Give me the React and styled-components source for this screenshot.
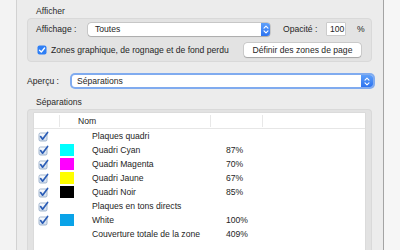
import React from 'react';
import styled, { createGlobalStyle } from 'styled-components';

const rows = [
  { name: 'Plaques quadri', checked: true },
  { name: 'Quadri Cyan', color: '#00ffff', value: '87%', checked: true },
  { name: 'Quadri Magenta', color: '#ff00ff', value: '70%', checked: true },
  { name: 'Quadri Jaune', color: '#ffff00', value: '67%', checked: true },
  { name: 'Quadri Noir', color: '#000000', value: '85%', checked: true },
  { name: 'Plaques en tons directs', checked: true },
  { name: 'White', color: '#0aa3e8', value: '100%', checked: true },
  { name: 'Couverture totale de la zone', value: '409%' },
];

const Stepper = ({ width }) => (
  <StepperBox style={{ width }}>
    <svg width="6" height="9" viewBox="0 0 6 9">
      <path d="M1 3.2 L3 1.2 L5 3.2 M1 5.8 L3 7.8 L5 5.8" fill="none" stroke="#fff" strokeWidth="1.1" strokeLinecap="round" strokeLinejoin="round" />
    </svg>
  </StepperBox>
);

const TableCheck = () => (
  <svg width="11" height="11" viewBox="0 0 11 11">
    <defs>
      <linearGradient id="cbg" x1="0" y1="0" x2="0" y2="1">
        <stop offset="0" stopColor="#ffffff" />
        <stop offset="1" stopColor="#cfdcec" />
      </linearGradient>
    </defs>
    <rect x="1" y="2" width="8" height="8" rx="1.5" fill="url(#cbg)" stroke="#8ea5c2" strokeWidth="0.8" />
    <path d="M2.6 5.6 L4.6 8.2 L9.6 1.4" fill="none" stroke="#2b5db6" strokeWidth="1.7" strokeLinecap="round" strokeLinejoin="round" />
  </svg>
);

const BlueCheck = () => (
  <svg width="10" height="10" viewBox="0 0 10 10">
    <rect x="0.5" y="0.5" width="9" height="9" rx="2" fill="#2f7ff5" />
    <path d="M2.5 5.2 L4.3 7 L7.6 3" fill="none" stroke="#fff" strokeWidth="1.3" strokeLinecap="round" strokeLinejoin="round" />
  </svg>
);

export default function App() {
  return (
    <Window>
      <GlobalStyle />
      <SideStrip $side="left" />
      <Panel>
        <SectionLabel>Afficher</SectionLabel>
        <GroupBox>
          <FormRow>
            <FieldLabel $width={52}>Affichage :</FieldLabel>
            <SelectBox $width="182px" $height={13}>
              <span>Toutes</span>
              <Stepper width={9} />
            </SelectBox>
            <FieldLabel $width={44} style={{ marginLeft: 13 }}>Opacité :</FieldLabel>
            <NumberInput>100</NumberInput>
            <Unit>%</Unit>
          </FormRow>
          <FormRow>
            <CheckLabel>
              <BlueCheck />
              <span>Zones graphique, de rognage et de fond perdu</span>
            </CheckLabel>
            <PushButton>Définir des zones de page</PushButton>
          </FormRow>
        </GroupBox>

        <PreviewRow>
          <FieldLabel $width={45}>Aperçu :</FieldLabel>
          <SelectBox $focus $height={12} $width="auto">
            <span>Séparations</span>
            <Stepper width={12} />
          </SelectBox>
        </PreviewRow>

        <SectionLabel style={{ marginTop: 7 }}>Séparations</SectionLabel>
        <TableGroup>
          <Table>
            <HeaderRow>
              <HeaderCell />
              <HeaderCell $divider>
                <span>Nom</span>
              </HeaderCell>
              <HeaderCell $divider />
              <HeaderCell $divider />
            </HeaderRow>
            {rows.map((row) => (
              <Row key={row.name}>
                <CheckCell>{row.checked && <TableCheck />}</CheckCell>
                <div>{row.color && <Swatch $color={row.color} />}</div>
                <div>{row.name}</div>
                <div>{row.value}</div>
              </Row>
            ))}
          </Table>
        </TableGroup>
      </Panel>
      <SideStrip $side="right" />
    </Window>
  );
}

const GlobalStyle = createGlobalStyle`
  *, *::before, *::after {
    box-sizing: border-box;
  }
  html, body {
    margin: 0;
    padding: 0;
  }
  body {
    width: 400px;
    height: 250px;
    overflow: hidden;
    font-family: "Liberation Sans", Arial, sans-serif;
    font-size: 8.6px;
    color: #262626;
  }
`;

const Window = styled.div`
  display: flex;
  width: 400px;
  height: 250px;
  overflow: hidden;
`;

const SideStrip = styled.div`
  flex: none;
  width: 17px;
  background: ${(p) => (p.$side === 'left' ? '#f3f3f3' : '#f6f6f6')};
  border-${(p) => (p.$side === 'left' ? 'right' : 'left')}: 1px solid
    ${(p) => (p.$side === 'left' ? '#d2d2d2' : '#a4a4a4')};
`;

const Panel = styled.div`
  flex: 1;
  min-width: 0;
  display: flex;
  flex-direction: column;
  background: #ececec;
  padding: 5px 11px 0 10px;
`;

const SectionLabel = styled.div`
  height: 13px;
  line-height: 13px;
  padding-left: 9px;
  color: #2a2a2a;
`;

const GroupBox = styled.div`
  display: flex;
  flex-direction: column;
  gap: 7px;
  background: #e3e3e3;
  border: 1px solid #d9d9d9;
  border-radius: 4px;
  padding: 3px 10px 4px 8px;
`;

const FormRow = styled.div`
  display: flex;
  align-items: center;
  height: 14px;
`;

const FieldLabel = styled.span`
  flex: none;
  width: ${(p) => p.$width}px;
`;

const SelectBox = styled.div`
  display: flex;
  align-items: center;
  justify-content: space-between;
  flex: ${(p) => (p.$width === 'auto' ? '1' : 'none')};
  width: ${(p) => p.$width};
  height: ${(p) => p.$height}px;
  margin-right: ${(p) => (p.$focus ? '-1px' : '0')};
  padding-left: ${(p) => (p.$focus ? 5 : 7)}px;
  background: #fff;
  border-radius: 3px;
  box-shadow: ${(p) =>
    p.$focus
      ? '0 0 0 2px #80abef'
      : '0 0 0 0.5px rgba(0, 0, 0, 0.22), 0 0.5px 1px rgba(0, 0, 0, 0.15)'};
`;

const StepperBox = styled.div`
  display: flex;
  align-items: center;
  justify-content: center;
  height: 100%;
  border-radius: 0 3px 3px 0;
  background: linear-gradient(#5fa0fa, #2d73f0);
`;

const NumberInput = styled.div`
  flex: none;
  width: 18px;
  height: 12px;
  line-height: 12px;
  padding-left: 3px;
  background: #fff;
  box-shadow: 0 0 0 0.5px rgba(0, 0, 0, 0.2);
`;

const Unit = styled.span`
  margin-left: 12px;
`;

const CheckLabel = styled.label`
  display: flex;
  align-items: center;
  gap: 4px;
  margin-left: 1px;
`;

const PushButton = styled.div`
  margin-left: auto;
  width: 117px;
  height: 14px;
  line-height: 14px;
  text-align: center;
  background: #fff;
  border-radius: 3px;
  box-shadow: 0 0 0 0.5px rgba(0, 0, 0, 0.18), 0 0.5px 1px rgba(0, 0, 0, 0.2);
`;

const PreviewRow = styled.div`
  display: flex;
  align-items: center;
  height: 16px;
  margin-top: 11px;
  padding: 2px 0;
`;

const TableGroup = styled.div`
  flex: 1;
  display: flex;
  background: #e2e2e2;
  border: 1px solid #d9d9d9;
  border-bottom: none;
  border-radius: 4px 4px 0 0;
  padding: 3px 6px 0 6px;
`;

const Table = styled.div`
  flex: 1;
  background: #fff;
  box-shadow: 0 0 0 0.5px #d4d4d4;
`;

const HeaderRow = styled.div`
  display: grid;
  grid-template-columns: 25px 151px 52px 1fr;
  height: 16px;
  border-bottom: 1px solid #e6e6e6;
`;

const HeaderCell = styled.div`
  display: flex;
  align-items: center;
  margin: 2px 0 1px;
  padding-left: 18px;
  border-left: ${(p) => (p.$divider ? '1px solid #e8e8e8' : 'none')};
`;

const Row = styled.div`
  display: grid;
  grid-template-columns: 25px 33px 134px 1fr;
  align-items: center;
  height: 14px;
  color: #1e1e1e;
`;

const CheckCell = styled.div`
  display: flex;
  align-items: center;
  padding-left: 4px;
  height: 14px;
`;

const Swatch = styled.div`
  width: 14px;
  height: 12px;
  margin-left: 1px;
  background: ${(p) => p.$color};
`;
